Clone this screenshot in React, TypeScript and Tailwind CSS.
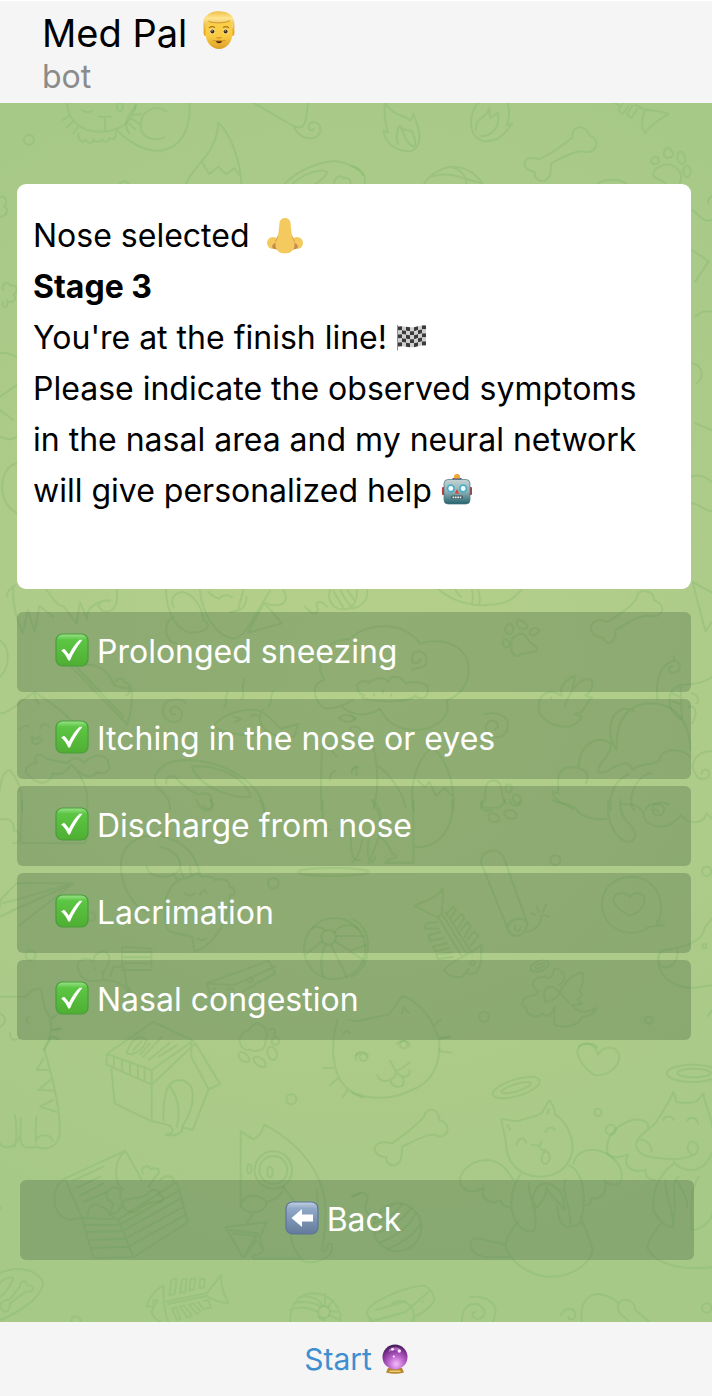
import type { ReactNode } from "react";

/** One patch of the wallpaper, drawn on a three-times-finer grid. */
function Patch({ x, y, children }: { x: number; y: number; children: ReactNode }) {
  return <g transform={`translate(${x} ${y}) scale(0.33333)`}>{children}</g>;
}

function Wallpaper() {
  return (
    <svg
      className="absolute inset-0 h-full w-full"
      viewBox="0 103 712 1219"
      preserveAspectRatio="xMidYMin slice"
      fill="none"
      stroke="#68ab5c"
      strokeOpacity="0.22"
      strokeWidth="6"
      strokeLinecap="round"
      strokeLinejoin="round"
      aria-hidden="true"
    >
      <Patch x={0} y={0}>
        <circle cx="87" cy="419" r="15" />
        <path d="M200 305C205 370 250 395 300 395C365 395 405 360 408 305M245 330q15 12 32 2M297 350h36M315 352v38M210 346l-22 14M222 362l-22 20M236 378l-16 22M400 345l24-4M396 358l22 12M388 372l18 16" />
        <path d="M236 400c-6 20 12 30 20 20c8 12 24 10 24-2c6 10 24 10 26 0c6 12 22 8 22-4c12 8 24-4 18-16M350 390C400 440 450 455 480 452C540 445 575 390 568 305M500 335C470 310 420 330 422 380C425 415 460 425 492 413M408 318C380 350 370 380 388 400" />
        <ellipse cx="360" cy="320" rx="9" ry="13" />
        <path d="M750 302L880 378C925 398 918 340 924 305M880 378C900 422 950 425 961 395C965 360 925 360 926 382q6 14 14 6" />
        <path d="M555 560C570 500 650 470 655 368C690 400 722 480 725 560M605 485L628 522L655 500L678 522L703 505L722 530" />
        <path d="M845 560C900 500 980 480 1020 485C1060 495 1080 510 1090 525M870 560C910 515 970 505 982 517C975 535 950 550 935 560M1003 560c-4-26 14-38 28-26c16-4 26 10 18 26M358 552l16-10l12 10" />
      </Patch>

      <Patch x={352} y={90}>
        <path d="M100 30C94 70 100 100 108 128L94 122C100 160 130 184 176 184C212 170 208 130 184 72L176 92C150 70 130 82 100 40M138 162C130 140 138 110 144 108C160 130 180 112 184 134C192 150 190 165 186 170C165 165 160 140 144 108" />
        <path d="M380 35C340 90 355 152 405 154C450 150 465 122 480 100L464 106C474 80 474 60 466 35M372 120C368 80 400 90 412 55L414 84L438 68C446 110 420 140 386 138" />
        <path d="M662 142C655 108 700 98 712 136C748 150 734 190 700 186C680 176 620 206 596 222C600 260 585 276 566 272C550 270 546 254 548 246C520 240 510 222 524 208C534 200 555 206 562 208C600 190 640 160 662 142Z" />
        <path d="M790 40l16 10M812 40L800 60l12 12L830 48M840 48L824 72l14 12L856 56M870 52L852 46M862 54C885 62 930 62 950 72C930 84 904 96 878 130C866 110 868 80 880 62" />
        <path d="M948 172C930 182 932 202 950 204C972 200 964 182 948 172ZM982 184C970 196 978 222 992 222C1008 212 998 186 982 184ZM908 200C890 210 898 224 914 222C928 212 920 200 908 200ZM1006 226C990 230 990 254 1004 262C1020 258 1020 232 1006 226ZM920 232C945 216 965 220 984 246C990 262 986 278 980 290M920 232C902 240 896 264 918 266C926 276 940 270 944 290" />
        <path d="M212 290C230 250 280 228 310 230C350 234 380 260 398 290M240 260C290 240 340 270 390 280M300 232C330 240 345 262 344 290M728 290C750 262 810 262 832 290M0 228C30 236 46 260 36 290M1080 318c-10 6-14 14-10 24" />
      </Patch>

      <Patch x={0} y={190}>
        <path d="M0 20c20-4 24 20 12 30c16 6 10 30-12 30M10 300c-8-20 14-30 22-12c20-8 24 20 8 26c18 14-10 30-18 18c2 26-16 26-14 4M0 490c20-4 36 2 50 12M0 620l52-36M0 740c20 10 40 8 52 0M50 820C10 830 0 880 10 920C20 950 36 960 52 970M0 660l40 30" />
      </Patch>
      <Patch x={692} y={190}>
        <path d="M0 60c20 10 30 40 60 30M0 180l50 34l-40 60M10 380c20-20 40-20 60-10M0 520c30 6 40 40 14 60M10 700l50 20M0 860c20-10 40 0 60 16M0 940c20 0 30 20 60 24" />
      </Patch>

      <Patch x={0} y={570}>
        <path d="M40 50C36 100 50 150 68 190L84 120L104 186L118 108L160 140M20 80q0-20 26-34M140 60C160 90 180 110 190 108L230 160L240 96L262 150C254 110 300 90 330 92M350 60C360 130 310 140 294 106C300 94 314 90 330 92" />
        <path d="M498 60C500 130 530 180 570 188C620 188 640 166 610 150C606 110 580 70 545 66C520 70 510 90 520 110M520 140C490 160 490 210 530 222M600 60C605 130 650 200 700 206C740 200 760 140 810 62M625 66C640 80 650 86 656 84M656 86q20-18 40-4M730 60L714 120L690 128M740 80c0 20-10 40-34 44M744 188L792 98L846 160ZM792 98C850 120 870 90 850 62M990 60C980 90 1000 120 1030 118C1060 120 1074 90 1070 62M1000 62q16 30 30 50M1022 62q16 30 30 46M1044 62q10 16 20 30M915 110c14 14 26 30 40 10c-16-24 6-34 26-10" />
        <path d="M0 212C30 230 32 290 0 320M200 275L382 464C396 420 400 360 390 350C380 360 356 350 342 346C330 310 290 270 240 290M210 270L370 440M342 346c6-20 26-30 30-10c20 4 22 30 8 40" />
        <path d="M556 398C545 384 510 386 494 402C480 430 495 456 525 456C556 450 550 412 524 410C504 414 508 440 526 432" />
        <path d="M672 412c16-14-4-26 12-46M724 388c16-14-6-26 10-60M806 410c14-14 0-30 14-46M640 470C665 430 740 410 784 424C810 440 830 466 842 476L895 462L882 500C850 500 830 500 810 490C760 500 700 500 640 470M790 420c-16 14-14 50 16 66M700 440l24 6M704 456l18-8M752 440q12-12 24 0" />
        <path d="M972 414C940 390 930 340 974 330C940 280 970 210 1050 206M972 414C1010 420 1040 400 1060 390M1016 444q24-18 52 0q-24 22-52 0M1050 482c0-18 30-12 30-4" />
        <path d="M0 430C30 430 50 400 104 366C140 390 200 430 220 460M104 366c0 20 6 30 14 36M60 480c12-16 20-14 26-10M120 474c6-14 20-14 26-6M94 500q12 14 26-2M100 500c-14 26 16 30 26 6M90 620C60 600 90 580 110 578C96 556 120 546 140 566L200 580C220 560 240 560 250 580C290 540 330 560 324 582C340 600 310 616 290 606C270 640 230 600 214 584C200 600 190 620 160 610C150 640 120 650 90 620M214 584C250 620 266 660 262 715M66 720C70 680 64 640 30 600C10 600 0 640 0 660" />
        <path d="M470 650C450 610 490 570 560 570C680 572 780 640 794 720M470 650C490 670 510 680 510 718M576 590C660 580 740 630 752 680C720 690 600 660 576 590ZM500 640c-10-24 30-30 36-6c20 14 40 36 60 40c20-10 46 0 36 20c20 20-16 30-24 14" />
        <path d="M968 510C962 600 962 660 964 720M968 510L1010 560M990 630c-2-20 10-26 18-28M1056 610c-4-16 10-22 20-20" />
      </Patch>

      <Patch x={352} y={570}>
        <path d="M262 60C310 100 370 110 410 104C470 104 490 80 508 60M310 60l16 20M360 60q6 20 0 40M378 60q8 20 4 40M0 116C30 110 48 90 46 60" />
        <path d="M856 82C850 56 906 54 906 90C950 110 930 144 896 138C866 130 830 160 790 180C794 220 766 230 752 204C716 200 706 170 730 154C746 140 760 160 768 154C800 136 840 110 856 82Z" />
        <path d="M498 148C486 164 504 184 526 174C526 162 514 152 498 148ZM472 160C450 174 460 194 476 192C490 180 484 164 472 160ZM562 180C546 166 530 180 534 194C546 200 560 192 562 180ZM456 208C446 224 460 236 472 230C474 214 466 206 456 208ZM502 192C476 200 474 220 480 230C474 256 494 264 508 252C524 246 540 250 554 242C560 224 530 222 526 206C520 194 510 190 502 192Z" />
        <path d="M0 200C50 160 150 150 204 220C280 200 350 230 350 300C348 360 310 380 284 392C300 440 250 480 190 480C130 480 100 450 84 416C50 440 0 440 -30 410M180 300C190 290 226 300 224 270C226 240 176 230 180 270c2 14 24 10 26-2M16 350C10 330 60 330 50 340C70 320 100 320 108 336C120 310 150 320 160 340C190 330 230 340 228 356C230 390 200 390 190 376C180 400 40 398 30 380M16 350q0 20 20 26M66 376v-4M92 368v-8M118 378v-6" />
        <path d="M630 378C580 340 540 400 570 440C610 480 670 480 690 440L668 432C700 430 690 410 720 384L700 376C724 360 724 340 718 330C690 320 660 350 638 408M630 378C620 350 640 330 668 318C670 340 660 350 660 358M598 382v4" />
        <path d="M398 432C440 424 470 440 468 466C466 510 410 510 404 486C396 460 410 450 424 452C440 456 444 474 428 478" />
        <path d="M1022 36L1060 184L1084 150M1022 36L1084 70M916 390C910 320 930 280 966 272C990 276 990 306 962 308C944 306 950 286 962 288M966 272v-14M1080 320C1050 346 1010 340 984 346C940 360 940 420 990 450M984 346C990 380 986 410 990 450M960 370l22 10M956 392l28 10M1020 370c16 4 24 20 14 30M1010 410c20-4 30 20 10 50" />
        <path d="M794 540C790 460 820 400 900 400C960 402 1010 440 1016 540M794 540C760 500 770 420 820 416q20 0 26 8M776 520C730 490 680 530 680 590M776 520C780 560 740 570 738 604C770 620 780 580 800 588C820 570 840 586 840 600C880 570 910 590 922 570C930 536 980 530 1016 560M702 640C720 600 680 586 640 594C610 610 620 640 618 670L600 664C610 700 640 700 664 718M848 720C820 700 850 610 900 610M776 720C770 670 790 630 830 612M1080 544C1030 540 1010 590 1030 610C1040 636 1070 630 1072 610C1066 590 1046 600 1050 612M900 720c0-20 30-30 50-16" />
        <path d="M0 440l10 10M64 530C80 600 80 660 64 718M70 580C110 610 150 660 160 710M184 718C170 640 200 560 240 534C280 560 310 640 304 718M198 632l20 20l14-16l20 42l26-24l24 26M0 600l14-10v26" />
        <path d="M400 690C370 720 400 726 420 720M400 690C396 640 410 630 430 632C460 640 440 680 462 700M462 646c16-10 24 10 12 20c-14 4-14-10-12-20M484 676c14-10 30 10 16 24c-14 4-20-10-16-24" />
      </Patch>

      <Patch x={0} y={800}>
        <path d="M64 0C70 40 60 60 64 130H250C270 120 250 110 220 118M0 60c30-10 46 10 40 30c26 4 26 40 0 40M590 0C600 30 620 40 634 26C640 14 636 6 632 0M780 0q14 30 14 50M968 0C970 60 960 80 990 90M1054 100C1050 150 1056 190 1080 180" />
        <path d="M440 336C370 300 350 200 370 160C390 110 460 90 520 120C570 140 590 180 600 220M480 140C560 160 560 230 490 230C460 230 444 220 440 200M500 380C480 300 510 240 560 234L594 218C600 240 640 220 644 240C680 230 690 250 688 262C710 260 710 290 690 286C690 350 650 430 584 456L576 410C540 400 500 400 500 380M520 220l12 20M540 206l10 26M570 200l2 26M556 280q14 14 28 0M600 284q14-24 20-4M590 416l16 6l12-6" />
        <path d="M0 350L220 250L60 374M10 290L50 250H220L10 310M220 250L30 334M0 320q0-30 20-36M262 340c20-10 30 10 20 20c-14 10-20-10-20-20" />
        <circle cx="820" cy="250" r="16" />
        <circle cx="92" cy="466" r="15" />
        <ellipse cx="1000" cy="216" rx="106" ry="12" />
        <circle cx="1004" cy="446" r="92" />
        <circle cx="986" cy="412" r="22" />
        <path d="M976 392C960 376 940 380 936 386M1004 398C1020 370 1060 370 1076 390M966 424L916 464M976 434C960 470 960 500 970 530M994 436L1040 530M1006 424L1090 480M1010 408h80" />
        <path d="M236 510C220 480 260 470 280 484C280 450 330 440 328 480C326 500 300 520 312 540C360 540 380 560 396 600M236 510C240 540 270 550 310 540M284 504v6M308 514v8M330 530L340 500H372L380 560M366 440V510H454V446Z M372 456h80M372 472h80M372 490h80M386 590v-30l14 30" />
        <path d="M620 550L806 482L826 520L700 590L630 580ZM620 550L700 556L826 500M640 566h6M740 540q10-14 20 0q-10 14-20 0M790 516v4M680 570q10-10 20 0" />
        <path d="M0 590H80C90 570 120 560 124 570C130 600 130 630 150 650C160 690 150 720 130 750M84 650c-6 12-4 20 4 22M154 656l20-14M158 690l24-4M156 710l20 8M30 700c0 20 14 24 30 14M0 640c20 10 20 30 0 40" />
      </Patch>

      <Patch x={352} y={800}>
        <path d="M64 0C110 50 80 120 50 190M184 0V188H100C110 170 140 180 130 166C110 160 120 130 80 110C100 60 70 20 58 0M300 0C310 90 250 150 190 140M30 120q-6 50-30 68M50 120C40 190 60 200 70 170" />
        <path d="M390 0C380 20 400 30 420 22C440 30 460 10 458 0M410 44c14-10 40 4 28 20c-18 8-32-4-28-20M456 40c10-20 40-6 38 10c-14 12-34 4-38-10M474 0c0 20 24 24 34 4M600 0C640 20 650 0 680 36C700 56 740 60 766 56M770 0C760 60 790 120 830 126C860 120 850 90 830 70C810 50 800 30 806 0M806 10C830 20 850 0 876 40C870 76 930 90 960 70C970 60 984 50 988 44C1000 70 1050 80 1064 40L1084 60M880 30C890 4 930 8 936 26C940 52 900 50 904 34c2-10 14-8 14 2" />
        <path d="M388 190C380 150 440 136 456 174L526 370C520 420 470 414 466 384ZM466 384C474 350 520 350 526 370M526 396C550 390 570 370 568 346M490 376c-6 16 10 26 16 6M548 344l-10-4M560 336l-6-16M572 336l10-22M576 346l16 4" />
        <circle cx="610" cy="181" r="15" />
        <circle cx="1064" cy="214" r="14" />
        <circle cx="397" cy="650" r="15" />
        <circle cx="890" cy="661" r="11" />
        <circle cx="1057" cy="438" r="6" />
        <path d="M914 372C950 310 910 230 838 230C780 232 748 270 750 320C760 400 850 416 890 380L938 376Q920 374 914 362M832 346C800 330 780 310 786 294C790 276 820 272 832 292C850 270 880 280 878 300C874 330 850 344 832 346Z" />
        <path d="M188 318C220 300 250 300 272 266C276 290 268 320 270 340L258 350C230 346 220 330 188 318ZM258 350L330 470M270 342L344 462M280 336L360 460M284 340L304 320L312 330L294 356M304 368L328 342L338 352L318 384M326 392L346 366L356 380L338 410M346 420L366 394L380 408L356 436M254 366L222 370L218 386L260 386M264 396L228 406L236 422L276 414M284 430L242 440L250 454L292 444M300 458L252 462l6 16L302 470M276 510C300 480 350 466 388 434C390 500 380 530 344 520L350 506L330 530C300 536 280 520 276 510Z" />
        <circle cx="361" cy="489" r="7" />
        <path d="M0 356C30 370 50 400 48 440C46 490 30 510 0 530M0 450l48-16M1080 356L1060 380C1050 430 1000 440 930 452C900 470 920 560 1020 564L1080 556M976 450C980 490 950 510 930 500C914 490 920 460 930 452" />
        <ellipse cx="563" cy="498" rx="28" ry="15" transform="rotate(-20 563 498)" />
        <ellipse cx="563" cy="498" rx="14" ry="6" transform="rotate(-20 563 498)" />
        <path d="M620 556C650 540 636 504 606 506C606 530 590 540 580 530C540 530 530 560 560 574L550 586C510 584 500 620 524 624C520 650 560 656 570 640C590 660 600 640 608 620L606 674C630 684 680 680 690 652C710 650 730 640 732 624C700 640 680 640 660 616L690 612L676 600L690 584L682 572C694 560 694 540 692 518C660 520 640 550 622 576C600 550 580 560 576 580L580 606C610 600 620 590 622 576L650 608" />
        <path d="M-10 660C20 670 60 650 110 644C130 620 140 600 152 588C190 600 230 640 250 690C260 710 264 730 262 750M150 640l4-20l18 20M246 676l20-16M264 716l28-4M680 740c10-14 50-10 54 2M1080 630l-12 18" />
      </Patch>

      <Patch x={0} y={1020}>
        <path d="M152 56C146 74 130 80 134 94C160 180 180 260 180 330C180 390 130 390 108 380C60 390 60 370 62 340C50 390 10 390 0 370M44 284C52 320 50 360 44 380M62 294V340M110 290C104 320 108 340 108 366C110 340 150 340 158 362M130 116L110 150L146 150M150 180L116 210L160 212M158 240L120 260L170 276M160 30l20-4M158 50l18 6" />
        <path d="M320 102L460 6L580 62L455 150ZM320 102V134L455 194V150M342 110v30M366 118v34M390 128v34M414 138v34M434 146v34M455 194L586 70L660 192L626 208L574 110V62M626 208L578 330L546 322M334 146L344 250L455 304V194M455 304L496 312M490 300C490 200 510 180 540 180C590 186 590 250 546 322C550 340 530 350 496 344C530 340 520 320 496 312M510 200C540 240 540 290 530 320M380 100C390 60 420 40 440 60C430 90 400 110 380 100M400 90l24-26M430 110L486 50M446 120L508 70M420 104L450 70M476 110L530 76" />
        <path d="M768 10C740 20 760 30 736 34C700 60 730 100 750 88C770 100 800 90 796 60C810 40 790 10 768 10M806 30c10-10 30 0 14 16M816 60c14-20 24-4 20 10c-16 10-22 0-20-10M718 98C730 90 750 110 748 124C730 130 710 116 718 98M760 116C770 100 800 120 796 140C776 144 762 130 760 116M804 84C820 70 840 100 826 118C806 126 800 100 804 84" />
        <circle cx="874" cy="238" r="15" />
        <path d="M1012 0C990 80 1000 140 1020 180C1040 210 1070 230 1090 232M970 144h30M990 196l22-20M1028 232l16-24M1030 40q12-12 20 0M1068 120q-4-20 12-24" />
        <path d="M194 476L376 392L424 478M194 476C150 500 150 590 210 600L246 594M194 476L246 594L280 714M246 594L355 598L530 486L564 606L400 712L280 714M355 598L400 712M252 614H360L540 510M260 636L366 634L546 534M266 660L376 656L552 560M274 684L384 680L558 584M376 392C340 420 340 490 370 510M220 482L310 440M230 504L300 470M240 526L310 490M252 546L320 516" />
        <path d="M428 460C420 440 446 430 452 448C480 436 484 460 466 470L446 500M480 480C500 460 530 470 518 486M330 510C340 490 370 510 360 530C380 550 350 590 330 580L340 550C320 540 310 520 330 510M370 556C360 530 420 540 440 524C460 500 480 510 476 524C500 530 490 550 470 544C440 550 420 560 410 574C390 580 370 570 370 556M264 590C260 560 290 540 300 560C330 560 320 590 340 590" />
        <path d="M722 560V334L760 358L780 344L794 314C900 370 970 460 976 560C980 620 970 660 966 690C980 700 984 680 980 676C990 664 1000 672 996 690C990 720 930 740 900 716M722 560C726 520 780 520 800 546C796 584 740 584 722 560M800 546C830 540 850 520 850 500L880 540C900 560 900 580 880 620C860 660 890 700 904 716H760C750 700 780 710 790 690L780 650L800 606L676 622L730 714L772 640L690 630M730 714L770 660l20 30M950 510C954 540 952 580 944 610M1080 520l-22 10M700 640L780 650M760 580L740 610" />
        <circle cx="820" cy="450" r="56" />
        <circle cx="820" cy="450" r="42" />
        <ellipse cx="748" cy="446" rx="6" ry="14" />
        <ellipse cx="810" cy="456" rx="8" ry="16" />
        <path d="M0 760C40 740 110 740 130 790C120 840 50 880 0 900M0 790C20 766 50 770 36 784C20 820 0 830-10 840M60 800C60 780 80 780 82 796C110 796 100 820 78 814L30 850C30 880 10 880 4 864C-10 850 20 836 28 840ZM0 560v8M214 904c0-20 24-20 28 0" />
        <path d="M504 904C490 870 490 830 490 796C460 810 440 850 440 860L462 858L454 876C460 890 470 900 480 904M500 844L620 820L664 764C662 800 670 820 686 848C660 850 640 840 620 828L504 852M514 780L508 826L524 822L530 776ZM546 778L540 818L556 816L560 776ZM572 776L568 812L582 808L586 776ZM600 776L598 804L612 802L614 778ZM516 868L532 900L542 896L528 862ZM540 860L562 892L576 886L552 856ZM566 854L590 882L602 874L580 850ZM594 846L612 868L632 862L626 840L612 842" />
        <circle cx="466" cy="846" r="6" />
        <path d="M870 904C870 850 900 820 940 820C990 820 1024 860 1022 904M870 870C900 856 930 864 950 874M880 850C920 840 950 850 962 860M904 830C940 826 960 840 966 858M976 822L974 856M1000 840L984 862M1020 876L990 874M1022 900L988 886M956 890C960 900 970 900 976 900" />
        <circle cx="972" cy="876" r="18" />
      </Patch>

      <Patch x={352} y={1020}>
        <path d="M262 86C260 150 230 190 180 210C120 240 50 240 0 216M114 122q12 20 18 32q20-10 40-26M132 154C130 190 80 190 76 166M132 154C150 180 180 170 172 150M116 176C114 200 140 204 152 196C160 180 150 168 140 164M264 54l32-4M264 94l34 4M134 72c20-20 40-6 38 8M12 106c14-16 34-10 36 4" />
        <circle cx="155" cy="74" r="11" />
        <circle cx="34" cy="112" r="11" />
        <path d="M216 290C220 262 260 260 262 300C300 310 290 350 262 350C230 330 180 370 150 380C150 420 144 436 120 436C104 432 100 416 104 412C70 410 58 384 76 372C90 360 110 370 120 370C150 350 200 310 216 290Z" />
        <path d="M730 166C700 150 670 110 678 86C690 64 730 64 738 104C760 70 800 80 802 110C800 150 760 166 730 166Z" />
        <ellipse cx="493" cy="203" rx="73" ry="25" transform="rotate(-17 493 203)" />
        <ellipse cx="493" cy="203" rx="46" ry="11" transform="rotate(-17 493 203)" />
        <ellipse cx="1022" cy="160" rx="78" ry="26" />
        <ellipse cx="1026" cy="159" rx="50" ry="13" />
        <circle cx="738" cy="277" r="11" />
        <circle cx="776" cy="329" r="15" />
        <path d="M448 296C470 300 490 306 502 302C530 290 560 290 570 278L592 240C600 250 610 270 610 284C650 310 664 360 662 390C650 450 610 470 560 470C500 466 464 430 462 370C460 350 450 320 448 296ZM466 316l8 12M590 268l-4 14M494 374C500 350 518 350 522 368M580 336C588 318 606 322 608 330M540 374C560 380 566 376 568 364M560 378C570 394 576 394 578 388M580 394C562 410 568 432 582 432C600 420 594 396 580 394" />
        <path d="M506 462C480 500 470 540 484 590C500 630 530 640 546 632C560 600 540 580 552 560C536 540 530 520 530 490M546 570C530 520 560 490 584 490C630 500 640 540 636 570C620 540 590 530 584 500C584 530 570 550 546 570M616 560C620 590 620 610 644 620C680 620 690 610 690 590C700 540 700 460 652 436M640 480C630 520 650 540 656 610M484 480C460 440 440 420 400 420C350 424 320 460 324 490C340 520 370 520 396 502C380 540 420 556 446 540C450 560 460 560 476 560M664 432C670 400 700 386 730 390C780 396 816 440 808 480C800 500 770 496 758 482C770 520 740 540 718 534C720 550 710 556 702 554M500 602C450 660 460 690 470 700C500 750 560 772 600 770C670 770 720 720 722 690C710 640 690 610 686 590M460 672C420 670 390 650 366 656C340 670 360 710 410 712H470" />
        <path d="M964 216C950 250 930 280 910 310C890 330 850 350 852 380C860 400 880 410 900 412C950 420 1000 420 1030 402C1050 390 1030 350 1010 372C1000 390 1020 410 1030 402M964 216C970 230 970 240 974 246C1000 250 1020 250 1034 244L1054 220C1060 260 1080 290 1080 320M854 362C870 350 900 370 898 394M934 300C940 284 962 288 966 300M1006 302C1012 288 1034 290 1038 312M888 322C890 300 860 296 840 300C780 320 760 360 766 400C780 420 810 410 828 404C810 440 840 460 880 450C880 470 890 480 910 480M966 424C970 440 1000 454 1030 450C1060 440 1070 420 1080 400M966 430C910 470 900 530 904 570C920 600 940 620 962 622C970 580 940 540 940 480M962 622C980 560 950 480 980 470M974 480C1000 530 1010 540 1004 560M1040 470C1010 520 1020 560 1018 630C1050 630 1080 600 1080 580M930 606C890 660 880 680 890 690C920 740 1000 750 1080 742" />
        <circle cx="136" cy="622" r="72" />
        <path d="M0 530C30 510 50 520 46 540C30 570 50 590 70 596M66 610C100 600 130 580 150 554M70 640C110 630 150 600 176 566M86 666C130 650 170 620 192 580M110 686C150 670 190 640 204 614M84 580q20-10 40-26" />
        <path d="M44 880C50 840 190 790 220 798C240 810 246 830 248 840C230 870 210 880 186 890L180 904M44 880L54 904M44 880L60 904L160 876L236 810M120 850C160 830 190 860 186 900M72 870L160 844M330 904C330 860 350 850 376 852C410 870 400 900 370 896c-14-10-10-20 0-20M354 832C400 824 436 850 430 880L424 904M626 884C640 860 670 860 670 886C664 904 650 900 650 890M690 904C680 850 710 820 740 822C770 826 790 840 800 850C810 830 850 840 850 870L890 904M800 850C790 880 820 890 830 904M90 894v2M132 884v2M164 872v2M212 844v2" />
        <circle cx="1064" cy="864" r="14" />
      </Patch>
    </svg>
  );
}

function BlondMan() {
  return (
    <svg className="h-10 w-9 shrink-0" viewBox="0 0 36 40" role="img" aria-label="Blond man">
      <defs>
        <linearGradient id="man-skin" x1="0" y1="0" x2="0" y2="1">
          <stop offset="0" stopColor="#fbd34d" />
          <stop offset="0.65" stopColor="#f9cb42" />
          <stop offset="1" stopColor="#dd9d27" />
        </linearGradient>
        <linearGradient id="man-hair" x1="0" y1="0" x2="0" y2="1">
          <stop offset="0" stopColor="#eebf45" />
          <stop offset="0.35" stopColor="#ffe692" />
          <stop offset="1" stopColor="#dca32c" />
        </linearGradient>
      </defs>
      <ellipse cx="4.5" cy="21" rx="2" ry="4" fill="#e7a92c" />
      <ellipse cx="31.5" cy="21" rx="2" ry="4" fill="#e7a92c" />
      <path d="M4.5 13C4.5 5 10 2 18 2S31.5 5 31.5 13V22c0 9-6 16-13.500 16S4.500 31 4.500 22Z" fill="url(#man-skin)" />
      <path d="M3 20C1.500 12 2 6 6 4.500C10-1 24-1 29 3.500C34 6.500 34 14 33 20L31.500 16C32 13 30.500 12 29 9.500C22 12.500 12 12.500 8 10C6 12 4.500 14 4.500 17Z" fill="url(#man-hair)" />
      <path d="M7.500 10.300C13 12.500 23 12.500 29 9.600" fill="none" stroke="#c08527" strokeWidth="0.8" />
      <path d="M8.500 16.500q2.500-1.800 5-.2M22.500 16.300q2.500-1.600 5 .2" fill="none" stroke="#a8741b" strokeWidth="1.300" strokeLinecap="round" />
      <ellipse cx="11.300" cy="20.500" rx="2.500" ry="2.700" fill="#fff0b4" />
      <ellipse cx="24.700" cy="20.500" rx="2.500" ry="2.700" fill="#fff0b4" />
      <circle cx="11.400" cy="20.500" r="2" fill="#3d2716" />
      <circle cx="24.600" cy="20.500" r="2" fill="#3d2716" />
      <circle cx="11" cy="19.800" r="0.600" fill="#fff" />
      <circle cx="24.200" cy="19.800" r="0.600" fill="#fff" />
      <path d="M16 26.500q2 1.300 4 0" fill="none" stroke="#cf8d20" strokeWidth="1.200" strokeLinecap="round" />
      <path d="M12 29.800q3 .3 6-.3q3 .6 6 .3" fill="none" stroke="#c98721" strokeWidth="0.900" strokeLinecap="round" />
      <path d="M14.800 30.200h6.400q-.8 2-3.200 2t-3.200-2Z" fill="#4a250c" />
    </svg>
  );
}

function Nose() {
  return (
    <svg className="h-9 w-9 shrink-0" viewBox="0 0 36 36" role="img" aria-label="Nose">
      <circle cx="6" cy="25" r="6" fill="#f4c95d" />
      <circle cx="30" cy="25" r="6" fill="#f4c95d" />
      <path d="M11.500 16v8h-4ZM24.500 16v8h4Z" fill="#e3a95b" />
      <path d="M5 29c1-5 6-5 9-1l-2 3c-3 1-6 0-7-2ZM31 29c-1-5-6-5-9-1l2 3c3 1 6 0 7-2Z" fill="#c58b4d" />
      <path d="M12.500 5c.6-6.600 10.400-6.600 11 0l1.500 14c.4 3 3 5 2.500 9c-.7 4.800-4.500 7.500-9.500 7.500s-8.800-2.700-9.500-7.500c-.5-4 2.100-6 2.500-9Z" fill="#f4c95d" />
    </svg>
  );
}

function Flag() {
  const rows = [0, 1, 2, 3, 4];
  const columns = [0, 1, 2, 3, 4, 5, 6];
  const rise = [0.6, 0.2, 0.8, 1.3, 1.2, 0.3, -0.6, -0.6];
  return (
    <svg className="inline-block h-7 w-8 align-[-3px]" viewBox="0 0 32 28" role="img" aria-label="Chequered flag">
      {rows.map((r) =>
        columns.map((c) => {
          const x = 2 + c * 4;
          const y = 2 + r * 4;
          return (
            <path
              key={`${r}-${c}`}
              fill={(r + c) % 2 === 0 ? "#3b3b3b" : "#cfcfcf"}
              d={`M${x} ${y + rise[c]}L${x + 4} ${y + rise[c + 1]}V${y + rise[c + 1] + 4}L${x} ${y + rise[c] + 4}Z`}
            />
          );
        }),
      )}
      <path d="M1.500 1V26.500" stroke="#8a8f94" strokeWidth="1" />
    </svg>
  );
}

function Robot() {
  return (
    <svg className="inline-block h-8 w-8 align-[-3px]" viewBox="0 0 32 32" role="img" aria-label="Robot">
      <defs>
        <linearGradient id="robot-head" x1="0" y1="0" x2="0" y2="1">
          <stop offset="0" stopColor="#c3d3d4" />
          <stop offset="0.5" stopColor="#8fb0b4" />
          <stop offset="1" stopColor="#25636f" />
        </linearGradient>
      </defs>
      <path d="M11.500 5h9v3h-9Z" fill="#5d4a8e" />
      <path d="M13 2.500q3-3.600 6 0v3h-6Z" fill="#f0a935" />
      <rect x="1" y="14" width="3" height="8" rx="1" fill="#b93a3f" />
      <rect x="28" y="14" width="3" height="8" rx="1" fill="#b93a3f" />
      <rect x="3" y="6.500" width="26" height="24.500" rx="4" fill="url(#robot-head)" stroke="#49747d" strokeWidth="0.700" />
      <circle cx="9.800" cy="15.500" r="3.300" fill="#f4ffff" stroke="#4dadc9" strokeWidth="1.700" />
      <circle cx="22.200" cy="15.500" r="3.300" fill="#f4ffff" stroke="#4dadc9" strokeWidth="1.700" />
      <path d="M16 16l2.200 4.500h-4.400Z" fill="#d8453f" />
      <rect x="10" y="22.500" width="12" height="3.500" rx="1.500" fill="#405a60" />
      <path d="M11.500 24.300h9" stroke="#f2f2f2" strokeWidth="1.700" strokeDasharray="1.700 0.700" />
    </svg>
  );
}

function CheckTile() {
  return (
    <svg className="h-[34px] w-[34px] shrink-0" viewBox="0 0 34 34" aria-hidden="true">
      <defs>
        <linearGradient id="check-fill" x1="0" y1="0" x2="0" y2="1">
          <stop offset="0" stopColor="#9be38a" />
          <stop offset="0.18" stopColor="#5cc644" />
          <stop offset="1" stopColor="#4fae32" />
        </linearGradient>
      </defs>
      <rect x="1" y="1" width="32" height="32" rx="6.500" fill="url(#check-fill)" stroke="#4a9d3c" strokeWidth="1.200" />
      <path d="M6.200 17.500L9 15.800C11 17.500 12.500 19.500 13.900 21.500C17 15.500 20.500 10.500 24.500 6.800H27.500C23 12.500 18 20 15 27.500H13.300C11.500 23 9 20 6.200 17.500Z" fill="#fff" />
    </svg>
  );
}

function ArrowTile() {
  return (
    <svg className="h-[34px] w-[34px] shrink-0" viewBox="0 0 34 34" aria-hidden="true">
      <defs>
        <linearGradient id="arrow-fill" x1="0" y1="0" x2="0" y2="1">
          <stop offset="0" stopColor="#c3d1e4" />
          <stop offset="0.2" stopColor="#91a9c9" />
          <stop offset="1" stopColor="#637a9b" />
        </linearGradient>
      </defs>
      <rect x="1" y="1" width="32" height="32" rx="6.500" fill="url(#arrow-fill)" stroke="#5d7599" strokeWidth="1.200" />
      <path d="M6.500 17L17 8V13.500H28V20.500H17V26Z" fill="#fff" />
    </svg>
  );
}

function CrystalBall() {
  return (
    <svg className="h-[30px] w-[26px] shrink-0" viewBox="0 0 26 30" aria-hidden="true">
      <defs>
        <radialGradient id="ball-fill" cx="0.55" cy="0.78" r="0.75">
          <stop offset="0" stopColor="#f3bdfb" />
          <stop offset="0.4" stopColor="#bf67cf" />
          <stop offset="0.78" stopColor="#803192" />
          <stop offset="1" stopColor="#46205a" />
        </radialGradient>
      </defs>
      <path d="M6 24h14l2 4.500q-9 2.500-18 0Z" fill="#b8862e" />
      <path d="M8 26.500h10l1 1.500h-12Z" fill="#ecd06b" />
      <circle cx="13" cy="13" r="12.500" fill="url(#ball-fill)" />
      <path d="M7 5.500q4-3.500 10-1.500l1 3q-6-2-11 1Z" fill="#d68ae2" opacity="0.6" />
      <circle cx="10.500" cy="5.300" r="1.300" fill="#fff" />
      <circle cx="17.300" cy="7" r="1.700" fill="#ffe6ff" />
      <circle cx="11.800" cy="12.500" r="1" fill="#fff" />
    </svg>
  );
}

const symptoms = [
  "Prolonged sneezing",
  "Itching in the nose or eyes",
  "Discharge from nose",
  "Lacrimation",
  "Nasal congestion",
];

export default function App() {
  return (
    <div className="flex min-h-screen flex-col bg-[#f5f5f5] font-['Inter',sans-serif]">
      <header className="border-t border-white px-[42px] pt-2 pb-[6px]">
        <h1 className="flex items-center gap-[14px] text-[38px] leading-[48px] text-black">
          Med Pal
          <span className="pb-1">
            <BlondMan />
          </span>
        </h1>
        <p className="text-[32px] leading-10 text-[#8b8b8b]">bot</p>
      </header>

      <main className="relative flex grow flex-col bg-[radial-gradient(ellipse_110%_62%_at_50%_46%,#b5d08a_0%,#adcb89_50%,#a7c988_80%)]">
        <Wallpaper />
        <div className="relative flex grow flex-col pt-[81px] pb-[62px]">
          <section className="mr-[21px] ml-[17px] rounded-[9px] bg-white pt-[26px] pr-9 pb-[73px] pl-4 text-[32px] leading-[51px] text-black">
            <p className="flex items-center gap-[18px]">
              Nose selected
              <Nose />
            </p>
            <h2 className="font-bold">Stage 3</h2>
            <p>
              You're at the finish line! <Flag />
            </p>
            <p>
              Please indicate the observed symptoms in the nasal area and my neural network will give personalized help{" "}
              <Robot />
            </p>
          </section>

          <ul className="mt-[23px] mr-[21px] ml-[17px] flex flex-col gap-[7px]">
            {symptoms.map((symptom) => (
              <li key={symptom}>
                <button
                  type="button"
                  className="flex h-20 w-full items-center gap-2 rounded-[6px] bg-[#4c6e47]/35 pb-1 pl-[38px] text-left text-[32px] text-white"
                >
                  <CheckTile />
                  <span className="pt-1">{symptom}</span>
                </button>
              </li>
            ))}
          </ul>

          <div className="mt-auto mr-[18px] ml-5">
            <button
              type="button"
              className="flex h-20 w-full items-center justify-center gap-2 rounded-[6px] bg-[#4c6e47]/35 pr-7 pb-1 text-[32px] text-white"
            >
              <ArrowTile />
              <span className="pt-1">Back</span>
            </button>
          </div>
        </div>
      </main>

      <footer className="flex h-[74px] items-center justify-center">
        <button type="button" className="flex items-center gap-[10px] text-[30px] text-[#3f8ed0]">
          Start
          <CrystalBall />
        </button>
      </footer>
    </div>
  );
}
